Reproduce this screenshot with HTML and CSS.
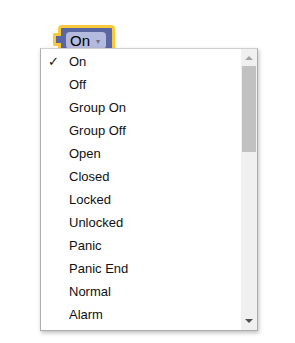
FILE: index.html
```html
<!DOCTYPE html>
<html lang="en">
<head>
    <meta charset="UTF-8">
    <title>Dropdown</title>
    <link rel="stylesheet" href="styles.css">
</head>
<body>
    <div class="block">
        <div class="tab"></div>
        <div class="block-body">
            <span class="field"><span class="label">On</span><span class="arrow">&#9662;</span></span>
        </div>
    </div>

    <div class="menu">
        <ul class="items">
            <li class="checked"><span class="check">&#10003;</span>On</li>
            <li>Off</li>
            <li>Group On</li>
            <li>Group Off</li>
            <li>Open</li>
            <li>Closed</li>
            <li>Locked</li>
            <li>Unlocked</li>
            <li>Panic</li>
            <li>Panic End</li>
            <li>Normal</li>
            <li>Alarm</li>
        </ul>
        <div class="scrollbar">
            <div class="scroll-btn up"></div>
            <div class="thumb"></div>
            <div class="track"></div>
            <div class="scroll-btn down"></div>
        </div>
    </div>
</body>
</html>
```

FILE: styles.css
```css
body {
    margin: 0;
    background: #ffffff;
    font-family: "Liberation Sans", Arial, sans-serif;
    width: 295px;
    height: 343px;
    overflow: hidden;
}
.block {
    position: absolute;
    left: 58px;
    top: 25px;
}
.block-body {
    background: #5b67a5;
    border: 3px solid #f8c93a;
    border-radius: 4px;
    padding: 4px 6px 8px 5px;
}
.tab {
    position: absolute;
    left: -5px;
    top: 8px;
    width: 5px;
    height: 7px;
    background: #5b67a5;
    border: 3px solid #f8c93a;
    border-right: none;
    border-radius: 2px 0 0 2px;
}
.field {
    display: flex;
    align-items: center;
    width: 40px;
    box-sizing: border-box;
    background: #b5badf;
    border-radius: 4px;
    padding: 0 4px;
    white-space: nowrap;
}
.label {
    font-size: 15px;
    line-height: 17px;
    color: #000;
}
.arrow {
    font-size: 8px;
    color: #6b6f8a;
    margin-left: 6px;
    margin-top: 1px;
}
.menu {
    position: absolute;
    left: 40px;
    top: 48px;
    width: 216px;
    height: 281px;
    background: #ffffff;
    border: 1px solid #adadad;
    border-top-color: #cfcfcf;
    box-shadow: 1px 2px 4px rgba(0, 0, 0, 0.25);
    display: flex;
    overflow: hidden;
}
.items {
    list-style: none;
    margin: 0;
    padding: 1px 0 0 0;
    flex: 1;
}
.items li {
    height: 23px;
    line-height: 23px;
    padding-left: 28px;
    font-size: 13px;
    color: #111;
    position: relative;
}
.check {
    position: absolute;
    left: 7px;
    font-size: 13px;
}
.scrollbar {
    width: 16px;
    background: #f0f0f0;
    display: flex;
    flex-direction: column;
}
.scroll-btn {
    height: 17px;
    position: relative;
}
.scroll-btn.up::after, .scroll-btn.down::after {
    content: "";
    position: absolute;
    left: 4px;
    border-left: 4px solid transparent;
    border-right: 4px solid transparent;
}
.scroll-btn.up::after {
    top: 7px;
    border-bottom: 4px solid #a3a3a3;
}
.scroll-btn.down::after {
    top: 6px;
    border-top: 4px solid #505050;
}
.thumb {
    height: 86px;
    margin: 0 1px;
    background: #c1c1c1;
}
.track {
    flex: 1;
}
```
